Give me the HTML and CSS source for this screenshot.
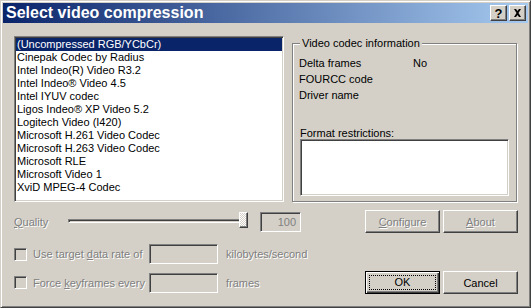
FILE: index.html
```html
<!DOCTYPE html>
<html lang="en">

<head>
  <meta charset="UTF-8">
  <title>Select video compression</title>
  <link rel="stylesheet" href="styles.css">
</head>

<body>
  <div class="window">
    <div class="titlebar">
      <span class="title">Select video compression</span>
      <div class="caption-buttons">
        <span class="cap-btn help">?</span>
        <span class="cap-btn">
          <svg width="9" height="8" viewBox="0 0 9 8"><path d="M1 0h2l1.5 2 1.5-2h2l-2.5 4 2.5 4h-2l-1.5-2-1.5 2h-2l2.5-4z" fill="#000"/></svg>
        </span>
      </div>
    </div>

    <div class="dialog">
      <div class="top-row">
        <ul class="listbox">
          <li class="selected">(Uncompressed RGB/YCbCr)</li>
          <li>Cinepak Codec by Radius</li>
          <li>Intel Indeo(R) Video R3.2</li>
          <li>Intel Indeo® Video 4.5</li>
          <li>Intel IYUV codec</li>
          <li>Ligos Indeo® XP Video 5.2</li>
          <li>Logitech Video (I420)</li>
          <li>Microsoft H.261 Video Codec</li>
          <li>Microsoft H.263 Video Codec</li>
          <li>Microsoft RLE</li>
          <li>Microsoft Video 1</li>
          <li>XviD MPEG-4 Codec</li>
        </ul>

        <fieldset class="groupbox">
          <legend>Video codec information</legend>
          <div class="info">
            <span>Delta frames</span><span>No</span>
            <span>FOURCC code</span><span></span>
            <span>Driver name</span><span></span>
          </div>
          <div class="restrict-label">Format restrictions:</div>
          <div class="edit restrict-box"></div>
        </fieldset>
      </div>

      <div class="row quality-row">
        <span class="disabled quality-label"><u>Q</u>uality</span>
        <div class="slider">
          <div class="track"></div>
          <div class="thumb"></div>
        </div>
        <div class="edit quality-box">100</div>
        <div class="buttons">
          <button class="btn disabled"><u>C</u>onfigure</button>
          <button class="btn disabled"><u>A</u>bout</button>
        </div>
      </div>

      <div class="row">
        <span class="check"></span>
        <span class="disabled check-label">Use target <u>d</u>ata rate of</span>
        <div class="edit small-box"></div>
        <span class="disabled unit">kilobytes/second</span>
      </div>

      <div class="row last-row">
        <span class="check"></span>
        <span class="disabled check-label">Force <u>k</u>eyframes every</span>
        <div class="edit small-box"></div>
        <span class="disabled unit">frames</span>
        <div class="buttons">
          <button class="btn default"><span class="focus">OK</span></button>
          <button class="btn">Cancel</button>
        </div>
      </div>
    </div>
  </div>
</body>

</html>
```

FILE: styles.css
```css
* {
  padding: 0;
  margin: 0;
  box-sizing: border-box;
}

body {
  background-color: #d4d0c8;
  font-family: "Liberation Sans", Arial, sans-serif;
  font-size: 11px;
  color: #000;
}

u {
  text-decoration: underline;
  text-underline-offset: 1px;
}

/* window frame */
.window {
  width: 531px;
  height: 308px;
  background: #d4d0c8;
  border: 1px solid;
  border-color: #d4d0c8 #404040 #404040 #d4d0c8;
  box-shadow: inset 1px 1px #ffffff, inset -1px -1px #808080;
  padding: 2px;
}

.titlebar {
  display: flex;
  justify-content: space-between;
  align-items: center;
  height: 20px;
  padding: 0 2px 0 3px;
  background: linear-gradient(to right, #0a246a, #a6caf0);
}

.title {
  color: #ffffff;
  font-size: 16px;
  font-weight: 700;
  line-height: 20px;
  white-space: nowrap;
}

.caption-buttons {
  display: flex;
  gap: 2px;
}

.cap-btn {
  display: flex;
  justify-content: center;
  align-items: center;
  width: 17px;
  height: 16px;
  background: #d4d0c8;
  border: 1px solid;
  border-color: #ffffff #404040 #404040 #ffffff;
  box-shadow: inset -1px -1px #808080;
  font-size: 13px;
  font-weight: 700;
}

/* dialog body */
.dialog {
  padding: 13px 10px 0 11px;
}

.top-row {
  display: flex;
  gap: 8px;
  height: 166px;
}

.edit,
.listbox {
  border: 1px solid;
  border-color: #808080 #ffffff #ffffff #808080;
  box-shadow: inset 1px 1px #404040, inset -1px -1px #d4d0c8;
}

.listbox {
  width: 270px;
  list-style: none;
  background: #ffffff;
  padding: 1px;
}

.listbox li {
  height: 13px;
  line-height: 13px;
  padding-left: 1px;
  white-space: nowrap;
}

.listbox li.selected {
  background: #0a246a;
  color: #ffffff;
}

.groupbox {
  width: 225px;
  height: 165px;
  margin-top: 1px;
  border: 1px solid #808080;
  box-shadow: 1px 1px #ffffff, inset 1px 1px #ffffff;
  padding: 0 7px 0 6px;
}

.groupbox legend {
  padding: 0 2px;
  margin-left: 1px;
  line-height: 13px;
  background: #d4d0c8;
}

.info {
  display: grid;
  grid-template-columns: 114px 1fr;
  line-height: 16px;
  padding-top: 5px;
}

.restrict-label {
  margin-top: 24px;
  line-height: 13px;
  padding-left: 1px;
}

.restrict-box {
  height: 57px;
  margin: -1px 0 0 1px;
  background: #ffffff;
}

/* lower rows */
.row {
  display: flex;
  align-items: center;
  height: 20px;
  margin-top: 11px;
}

.quality-row {
  height: 23px;
  margin-top: 8px;
}

.last-row {
  height: 23px;
  margin-top: 7px;
}

.disabled {
  color: #808080;
  text-shadow: 1px 1px #ffffff;
}

.quality-label {
  width: 54px;
}

.slider {
  position: relative;
  width: 179px;
  height: 23px;
}

.slider .track {
  position: absolute;
  left: 0;
  right: 0;
  top: 9px;
  height: 4px;
  border: 1px solid;
  border-color: #808080 #ffffff #ffffff #808080;
  box-shadow: inset 1px 1px #404040;
}

.slider .thumb {
  position: absolute;
  left: 171px;
  top: 2px;
  width: 9px;
  height: 16px;
  border: 1px solid;
  border-color: #ffffff #404040 #404040 #ffffff;
  box-shadow: inset -1px -1px #808080;
  background: repeating-conic-gradient(#ffffff 0 25%, #d4d0c8 0 50%) 0 0 / 2px 2px;
}

.quality-box {
  width: 41px;
  height: 20px;
  margin-left: 13px;
  color: #808080;
  text-align: right;
  line-height: 18px;
  padding-right: 4px;
}

.buttons {
  display: flex;
  gap: 3px;
  margin-left: auto;
}

.btn {
  width: 75px;
  height: 23px;
  background: #d4d0c8;
  border: 1px solid;
  border-color: #ffffff #404040 #404040 #ffffff;
  box-shadow: inset -1px -1px #808080;
  font-family: inherit;
  font-size: 11px;
  color: #000;
}

.btn.disabled {
  color: #808080;
}

.btn.default {
  border-color: #000;
  box-shadow: inset 1px 1px #ffffff, inset -1px -1px #404040, inset -2px -2px #808080;
  padding: 3px;
  display: flex;
}

.btn .focus {
  flex: 1;
  border: 1px dotted #000;
  line-height: 13px;
}

.check {
  width: 13px;
  height: 13px;
  border: 1px solid;
  border-color: #808080 #ffffff #ffffff #808080;
  box-shadow: inset 1px 1px #404040, inset -1px -1px #d4d0c8;
}

.check-label {
  width: 116px;
  margin-left: 6px;
  white-space: nowrap;
}

.small-box {
  width: 69px;
  height: 20px;
}

.unit {
  margin-left: 8px;
}
```
